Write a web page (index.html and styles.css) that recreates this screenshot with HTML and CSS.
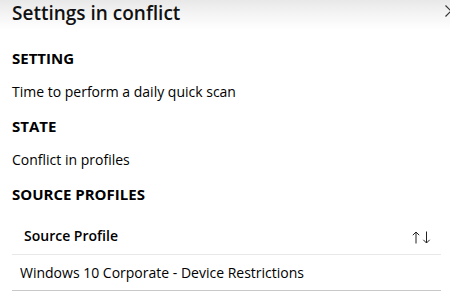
FILE: index.html
```html
<!DOCTYPE html>
<html lang="en">
<head>
    <meta charset="UTF-8">
    <title>Settings in conflict</title>
    <link rel="stylesheet" href="styles.css">
</head>
<body>
    <div class="blade">
        <div class="blade-header">
            <h1>Settings in conflict</h1>
            <button class="close-btn" aria-label="Close">
                <svg width="12" height="12" viewBox="0 0 12 12"><path d="M0.5 0.5 L11.5 11.5 M11.5 0.5 L0.5 11.5" stroke="#333" stroke-width="1.2" fill="none"/></svg>
            </button>
        </div>

        <div class="blade-content">
            <h2>SETTING</h2>
            <p>Time to perform a daily quick scan</p>

            <h2>STATE</h2>
            <p>Conflict in profiles</p>

            <h2>SOURCE PROFILES</h2>
            <table class="grid">
                <thead>
                    <tr>
                        <th>
                            Source Profile
                            <span class="sort">
                                <svg width="19" height="13" viewBox="0 0 19 13">
                                    <path d="M4 12.5 V1 M0.8 4.2 L4 1 L7.2 4.2" stroke="#222" stroke-width="1" fill="none"/>
                                    <path d="M14.5 0.5 V12 M11.3 8.8 L14.5 12 L17.7 8.8" stroke="#222" stroke-width="1" fill="none"/>
                                </svg>
                            </span>
                        </th>
                    </tr>
                </thead>
                <tbody>
                    <tr>
                        <td>Windows 10 Corporate - Device Restrictions</td>
                    </tr>
                </tbody>
            </table>
        </div>
    </div>
</body>
</html>
```

FILE: styles.css
```css
* {
    margin: 0;
    padding: 0;
    box-sizing: border-box;
}

body {
    font-family: 'Open Sans', 'Noto Sans', sans-serif;
    background: white;
    color: #000;
    overflow: hidden;
}

.blade-header {
    height: 30px;
    padding: 0 12px;
    display: flex;
    align-items: flex-start;
    justify-content: space-between;
    background: linear-gradient(to bottom, #e8e8e8 0%, #f5f5f5 50%, #ffffff 100%);
}

h1 {
    font-size: 19px;
    font-weight: 600;
    line-height: 26px;
    color: #111;
}

.close-btn {
    background: none;
    border: none;
    margin-top: 5px;
    margin-right: -19px;
}

.close-btn svg {
    display: block;
}

.blade-content {
    padding: 18px 12px 0 12px;
}

h2 {
    font-size: 15px;
    font-weight: 700;
    line-height: 20px;
    margin-bottom: 14px;
}

p {
    font-size: 14px;
    line-height: 20px;
    margin-bottom: 14px;
}

.grid {
    width: 429px;
    border-collapse: collapse;
}

.grid th {
    text-align: left;
    font-size: 14px;
    font-weight: 600;
    line-height: 20px;
    padding: 8px 12px 8px 12px;
    border-bottom: 1px solid #e8e8e8;
    position: relative;
}

.sort {
    position: absolute;
    right: 10px;
    top: 13px;
}

.sort svg {
    display: block;
}

.grid td {
    font-size: 14px;
    line-height: 20px;
    padding: 8px 8px 7px 8px;
    border-bottom: 1px solid #c8c8c8;
}
```
